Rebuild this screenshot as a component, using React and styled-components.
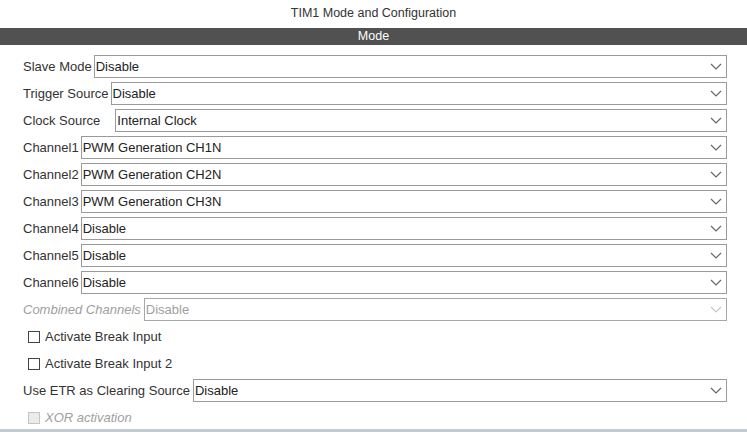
import React from "react";
import styled, { createGlobalStyle } from "styled-components";

const GlobalStyle = createGlobalStyle`
  html, body {
    margin: 0;
    padding: 0;
    background: #ffffff;
  }
  body {
    font-family: "Liberation Sans", Arial, sans-serif;
    font-size: 13px;
    color: #333333;
  }
`;

const Panel = styled.div`
  width: 747px;
  height: 432px;
  box-sizing: border-box;
  display: flex;
  flex-direction: column;
  border-bottom: 3px solid #c3cad3;
  overflow: hidden;
`;

const Title = styled.div`
  height: 28px;
  line-height: 27px;
  text-align: center;
  font-size: 12.5px;
  color: #333333;
`;

const SectionBar = styled.div`
  height: 17px;
  line-height: 17px;
  background: #505150;
  color: #ffffff;
  text-align: center;
  font-size: 12.5px;
`;

const Form = styled.div`
  display: flex;
  flex-direction: column;
  gap: 4px;
  padding: 10px 20px 0 23px;
`;

const Row = styled.div`
  display: flex;
  align-items: center;
  height: 23px;
  padding-left: ${(p) => p.$indent || 0}px;
`;

const Label = styled.span`
  white-space: nowrap;
  margin-right: ${(p) => p.$gap ?? 4}px;
  color: ${(p) => (p.$disabled ? "#a0a0a0" : "#333333")};
  font-style: ${(p) => (p.$disabled ? "italic" : "normal")};
`;

const Select = styled.div`
  flex: 1;
  height: 23px;
  box-sizing: border-box;
  border: 1px solid ${(p) => (p.$disabled ? "#a8a8a8" : "#9a9a9a")};
  display: flex;
  align-items: center;
  justify-content: space-between;
  padding: 0 4px 0 1px;
  color: ${(p) => (p.$disabled ? "#a0a0a0" : "#222222")};
  background: #ffffff;
`;

const Box = styled.span`
  width: 12px;
  height: 12px;
  box-sizing: border-box;
  border: 1px solid ${(p) => (p.$disabled ? "#c4c4c4" : "#444444")};
  background: ${(p) => (p.$disabled ? "#ebebeb" : "#ffffff")};
  margin-right: 5px;
`;

const Chevron = ({ disabled }) => (
  <svg width="12" height="7" viewBox="0 0 12 7">
    <polyline
      points="1,1 6,6 11,1"
      fill="none"
      stroke={disabled ? "#c8c8c8" : "#666666"}
      strokeWidth="1.2"
    />
  </svg>
);

const Field = ({ label, value, gap, disabled }) => (
  <Row>
    <Label $gap={gap} $disabled={disabled}>
      {label}
    </Label>
    <Select $disabled={disabled}>
      <span>{value}</span>
      <Chevron disabled={disabled} />
    </Select>
  </Row>
);

const Check = ({ label, disabled }) => (
  <Row $indent={5}>
    <Box $disabled={disabled} />
    <Label $disabled={disabled}>{label}</Label>
  </Row>
);

export default function App() {
  return (
    <>
      <GlobalStyle />
      <Panel>
        <Title>TIM1 Mode and Configuration</Title>
        <SectionBar>Mode</SectionBar>
        <Form>
          <Field label="Slave Mode" value="Disable" gap={2} />
          <Field label="Trigger Source" value="Disable" gap={2} />
          <Field label="Clock Source" value="Internal Clock" gap={15} />
          <Field label="Channel1" value="PWM Generation CH1N" gap={2} />
          <Field label="Channel2" value="PWM Generation CH2N" gap={2} />
          <Field label="Channel3" value="PWM Generation CH3N" gap={2} />
          <Field label="Channel4" value="Disable" gap={2} />
          <Field label="Channel5" value="Disable" gap={2} />
          <Field label="Channel6" value="Disable" gap={2} />
          <Field label="Combined Channels" value="Disable" gap={3} disabled />
          <Check label="Activate Break Input" />
          <Check label="Activate Break Input 2" />
          <Field label="Use ETR as Clearing Source" value="Disable" gap={3} />
          <Check label="XOR activation" disabled />
        </Form>
      </Panel>
    </>
  );
}
